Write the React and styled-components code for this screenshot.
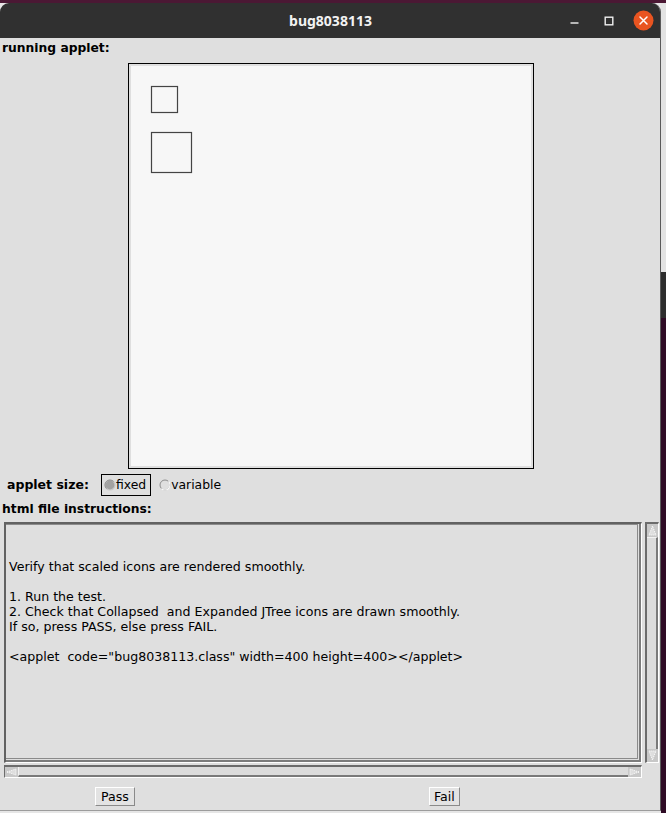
import React from "react";
import styled, { createGlobalStyle } from "styled-components";

const Global = createGlobalStyle`
  html, body { margin: 0; padding: 0; }
  body { width: 666px; height: 813px; overflow: hidden; background: #e6e6e6; }
`;

const Desktop = styled.div`
  display: flex;
  width: 666px;
  height: 813px;
  background: linear-gradient(#4b1834 0 3px, #e6e6e6 3px);
`;

const DesktopStrip = styled.div`
  width: 5px;
  height: 813px;
  background: linear-gradient(
    #4b1834 0 3px,
    #e3e3e3 3px 272px,
    #2d2d2d 272px 318px,
    #2f0b25 318px
  );
`;

const Window = styled.div`
  margin-top: 3px;
  width: 660px;
  height: 807px;
  border-right: 1px solid #5a5a5a;
  border-bottom: 1px solid #9c9c9c;
  border-radius: 9px 9px 0 0;
  background: #dfdfdf;
  display: flex;
  flex-direction: column;
  overflow: hidden;
`;

const TitleBar = styled.div`
  height: 35px;
  flex: none;
  background: #303030;
  display: grid;
  grid-template-columns: 1fr auto 1fr;
  align-items: center;
`;

const Title = styled.div`
  grid-column: 2;
  color: #f2f2f2;
  font-family: "Noto Sans", "DejaVu Sans", sans-serif;
  font-weight: 700;
  font-size: 14px;
  line-height: 16px;
  padding-left: 1px;
`;

const Controls = styled.div`
  grid-column: 3;
  justify-self: end;
  display: flex;
  align-items: center;
  padding-right: 6px;
`;

const CtrlIcon = styled.svg`
  display: block;
  margin-left: ${(p) => p.$ml}px;
  margin-top: ${(p) => p.$mt || 0}px;
`;

const Content = styled.div`
  display: flex;
  flex-direction: column;
  flex: 1;
  font-family: "DejaVu Sans", sans-serif;
  color: #000;
`;

const SectionLabel = styled.div`
  font-weight: 700;
  font-size: 12.3px;
  line-height: 14px;
  height: 14px;
  padding-left: 2px;
  margin-top: ${(p) => p.$mt}px;
  white-space: nowrap;
`;

const AppletFrame = styled.div`
  margin: 8px 0 0 128px;
  width: 400px;
  height: 400px;
  border: 1px solid #000;
  padding: 2px;
  background: #dfdfdf;
`;

const AppletCanvas = styled.svg`
  display: block;
  width: 400px;
  height: 400px;
  background: #f7f7f7;
`;

const SizeRow = styled.div`
  display: flex;
  align-items: center;
  height: 22px;
  margin-top: 5px;
  padding-left: 7px;
`;

const SizeLabel = styled.span`
  font-weight: 700;
  font-size: 12.5px;
  line-height: 14px;
  margin-right: 12px;
  white-space: nowrap;
`;

const RadioBox = styled.label`
  display: flex;
  align-items: center;
  height: 20px;
  padding: 0 4px 0 2px;
  border: 1px solid ${(p) => (p.$focused ? "#000" : "transparent")};
  margin-right: 5px;
  font-size: 12.4px;
  line-height: 14px;
  white-space: nowrap;
`;

const RadioDot = styled.svg`
  display: block;
  flex: none;
`;

const ScrollArea = styled.div`
  display: grid;
  grid-template-columns: 638px 14px;
  grid-template-rows: 241px 13px;
  column-gap: 3px;
  row-gap: 2px;
  margin: 6px 0 0 4px;
`;

const Frame = styled.div`
  box-sizing: border-box;
  border-style: solid;
  border-width: 2px 1px 1px 2px;
  border-color: #626262 #ffffff #ffffff #626262;
  box-shadow: inset -2px -2px 0 #7c7c7c;
  padding: 0 3px 3px 0;
  overflow: hidden;
`;

const TextBody = styled.div`
  box-sizing: border-box;
  height: 100%;
  border-right: 1px solid #8a8a8a;
  border-bottom: 1px solid #8a8a8a;
  border-top: 1px solid #8c8c8c;
  padding: 4px 0 0 3px;
  font-size: 12.6px;
  line-height: 15px;
  white-space: pre;
  overflow: hidden;
  color: #000;
`;

const VScroll = styled.div`
  box-sizing: border-box;
  border-style: solid;
  border-width: 2px 1px 1px 2px;
  border-color: #6c6c6c #ffffff #ffffff #6c6c6c;
  display: flex;
  flex-direction: column;
`;

const HScroll = styled.div`
  box-sizing: border-box;
  border-style: solid;
  border-width: 2px 1px 1px 1px;
  border-color: #6c6c6c #ffffff #ffffff #6c6c6c;
  display: flex;
`;

const Thumb = styled.div`
  flex: 1;
  background: #dcdcdc;
  border-style: solid;
  border-color: #f2f2f2 #7a7a7a #7a7a7a #f2f2f2;
  border-width: ${(p) => (p.$vertical ? "1px 2px 0 0" : "0 0 2px 1px")};
`;

const ArrowBtn = styled.svg`
  display: block;
  flex: none;
  background: #c8c8c8;
`;

const ButtonRow = styled.div`
  display: grid;
  grid-template-columns: 334px auto;
  justify-items: start;
  padding-left: 95px;
  margin-top: 9px;
`;

const Button = styled.button`
  box-sizing: border-box;
  height: 19px;
  padding: 0 ${(p) => p.$pad}px;
  margin: 0;
  border: 1px solid;
  border-color: #ffffff #8a8a8a #8a8a8a #ffffff;
  background: #e3e3e3;
  font-family: "DejaVu Sans", sans-serif;
  font-size: 12.6px;
  line-height: 15px;
  color: #000;
`;

function Radio({ checked }) {
  return (
    <RadioDot width="12" height="12" viewBox="0 0 12 12">
      {checked ? (
        <>
          <circle cx="6" cy="6" r="5" fill="#a2a2a2" stroke="#c9c9c9" strokeWidth="1.2" />
          <path d="M2.46 9.54 A5 5 0 0 1 9.54 2.46" fill="none" stroke="#8e8e8e" strokeWidth="1" />
        </>
      ) : (
        <>
          <circle cx="6" cy="6" r="5" fill="none" stroke="#8c8c8c" strokeWidth="1" />
          <path d="M2.46 9.54 A5 5 0 0 0 9.54 2.46" fill="none" stroke="#ffffff" strokeWidth="1.1" />
        </>
      )}
    </RadioDot>
  );
}

function Arrow({ dir, w, h }) {
  const pts = {
    up: [
      [w / 2, 2],
      [2, h - 2],
      [w - 2, h - 2],
    ],
    down: [
      [w / 2, h - 2],
      [2, 2],
      [w - 2, 2],
    ],
    left: [
      [2, h / 2],
      [w - 2, 2],
      [w - 2, h - 2],
    ],
    right: [
      [w - 2, h / 2],
      [2, 2],
      [2, h - 2],
    ],
  }[dir];
  const d = pts.map((p) => p.join(",")).join(" ");
  return (
    <ArrowBtn width={w} height={h} viewBox={`0 0 ${w} ${h}`}>
      <polygon points={d} fill="#dedede" stroke="#ffffff" strokeWidth="1" strokeDasharray="1 1" />
    </ArrowBtn>
  );
}

const instructions = `

Verify that scaled icons are rendered smoothly.

1. Run the test.
2. Check that Collapsed  and Expanded JTree icons are drawn smoothly.
If so, press PASS, else press FAIL.

<applet  code="bug8038113.class" width=400 height=400></applet>`;

export default function App() {
  return (
    <>
      <Global />
      <Desktop>
        <Window>
          <TitleBar>
            <Title>bug8038113</Title>
            <Controls>
              <CtrlIcon $ml={0} $mt={4} width="9" height="2" viewBox="0 0 9 2">
                <rect x="0.5" y="0.3" width="8" height="1.4" fill="#f0f0f0" />
              </CtrlIcon>
              <CtrlIcon $ml={25} width="10" height="10" viewBox="0 0 10 10">
                <rect x="1.2" y="1.2" width="7.6" height="7.6" fill="none" stroke="#f0f0f0" strokeWidth="1.4" />
              </CtrlIcon>
              <CtrlIcon $ml={19} width="21" height="21" viewBox="0 0 21 21">
                <circle cx="10.5" cy="10.5" r="10" fill="#e95420" />
                <path d="M7 7 L14 14 M14 7 L7 14" stroke="#ffffff" strokeWidth="1.5" strokeLinecap="round" />
              </CtrlIcon>
            </Controls>
          </TitleBar>
          <Content>
            <SectionLabel $mt={3}>running applet:</SectionLabel>
            <AppletFrame>
              <AppletCanvas viewBox="0 0 400 400">
                <rect x="20.5" y="20.5" width="26" height="26" fill="none" stroke="#444" strokeWidth="1.2" />
                <rect x="20.5" y="66.5" width="40" height="40" fill="none" stroke="#444" strokeWidth="1.2" />
              </AppletCanvas>
            </AppletFrame>
            <SizeRow>
              <SizeLabel>applet size:</SizeLabel>
              <RadioBox $focused>
                <Radio checked />
                fixed
              </RadioBox>
              <RadioBox>
                <Radio />
                variable
              </RadioBox>
            </SizeRow>
            <SectionLabel $mt={6}>html file instructions:</SectionLabel>
            <ScrollArea>
              <Frame>
                <TextBody>{instructions}</TextBody>
              </Frame>
              <VScroll>
                <Arrow dir="up" w={11} h={13} />
                <Thumb $vertical />
                <Arrow dir="down" w={11} h={13} />
              </VScroll>
              <HScroll>
                <Arrow dir="left" w={13} h={10} />
                <Thumb />
                <Arrow dir="right" w={13} h={10} />
              </HScroll>
            </ScrollArea>
            <ButtonRow>
              <Button $pad={5}>Pass</Button>
              <Button $pad={4}>Fail</Button>
            </ButtonRow>
          </Content>
        </Window>
        <DesktopStrip />
      </Desktop>
    </>
  );
}
